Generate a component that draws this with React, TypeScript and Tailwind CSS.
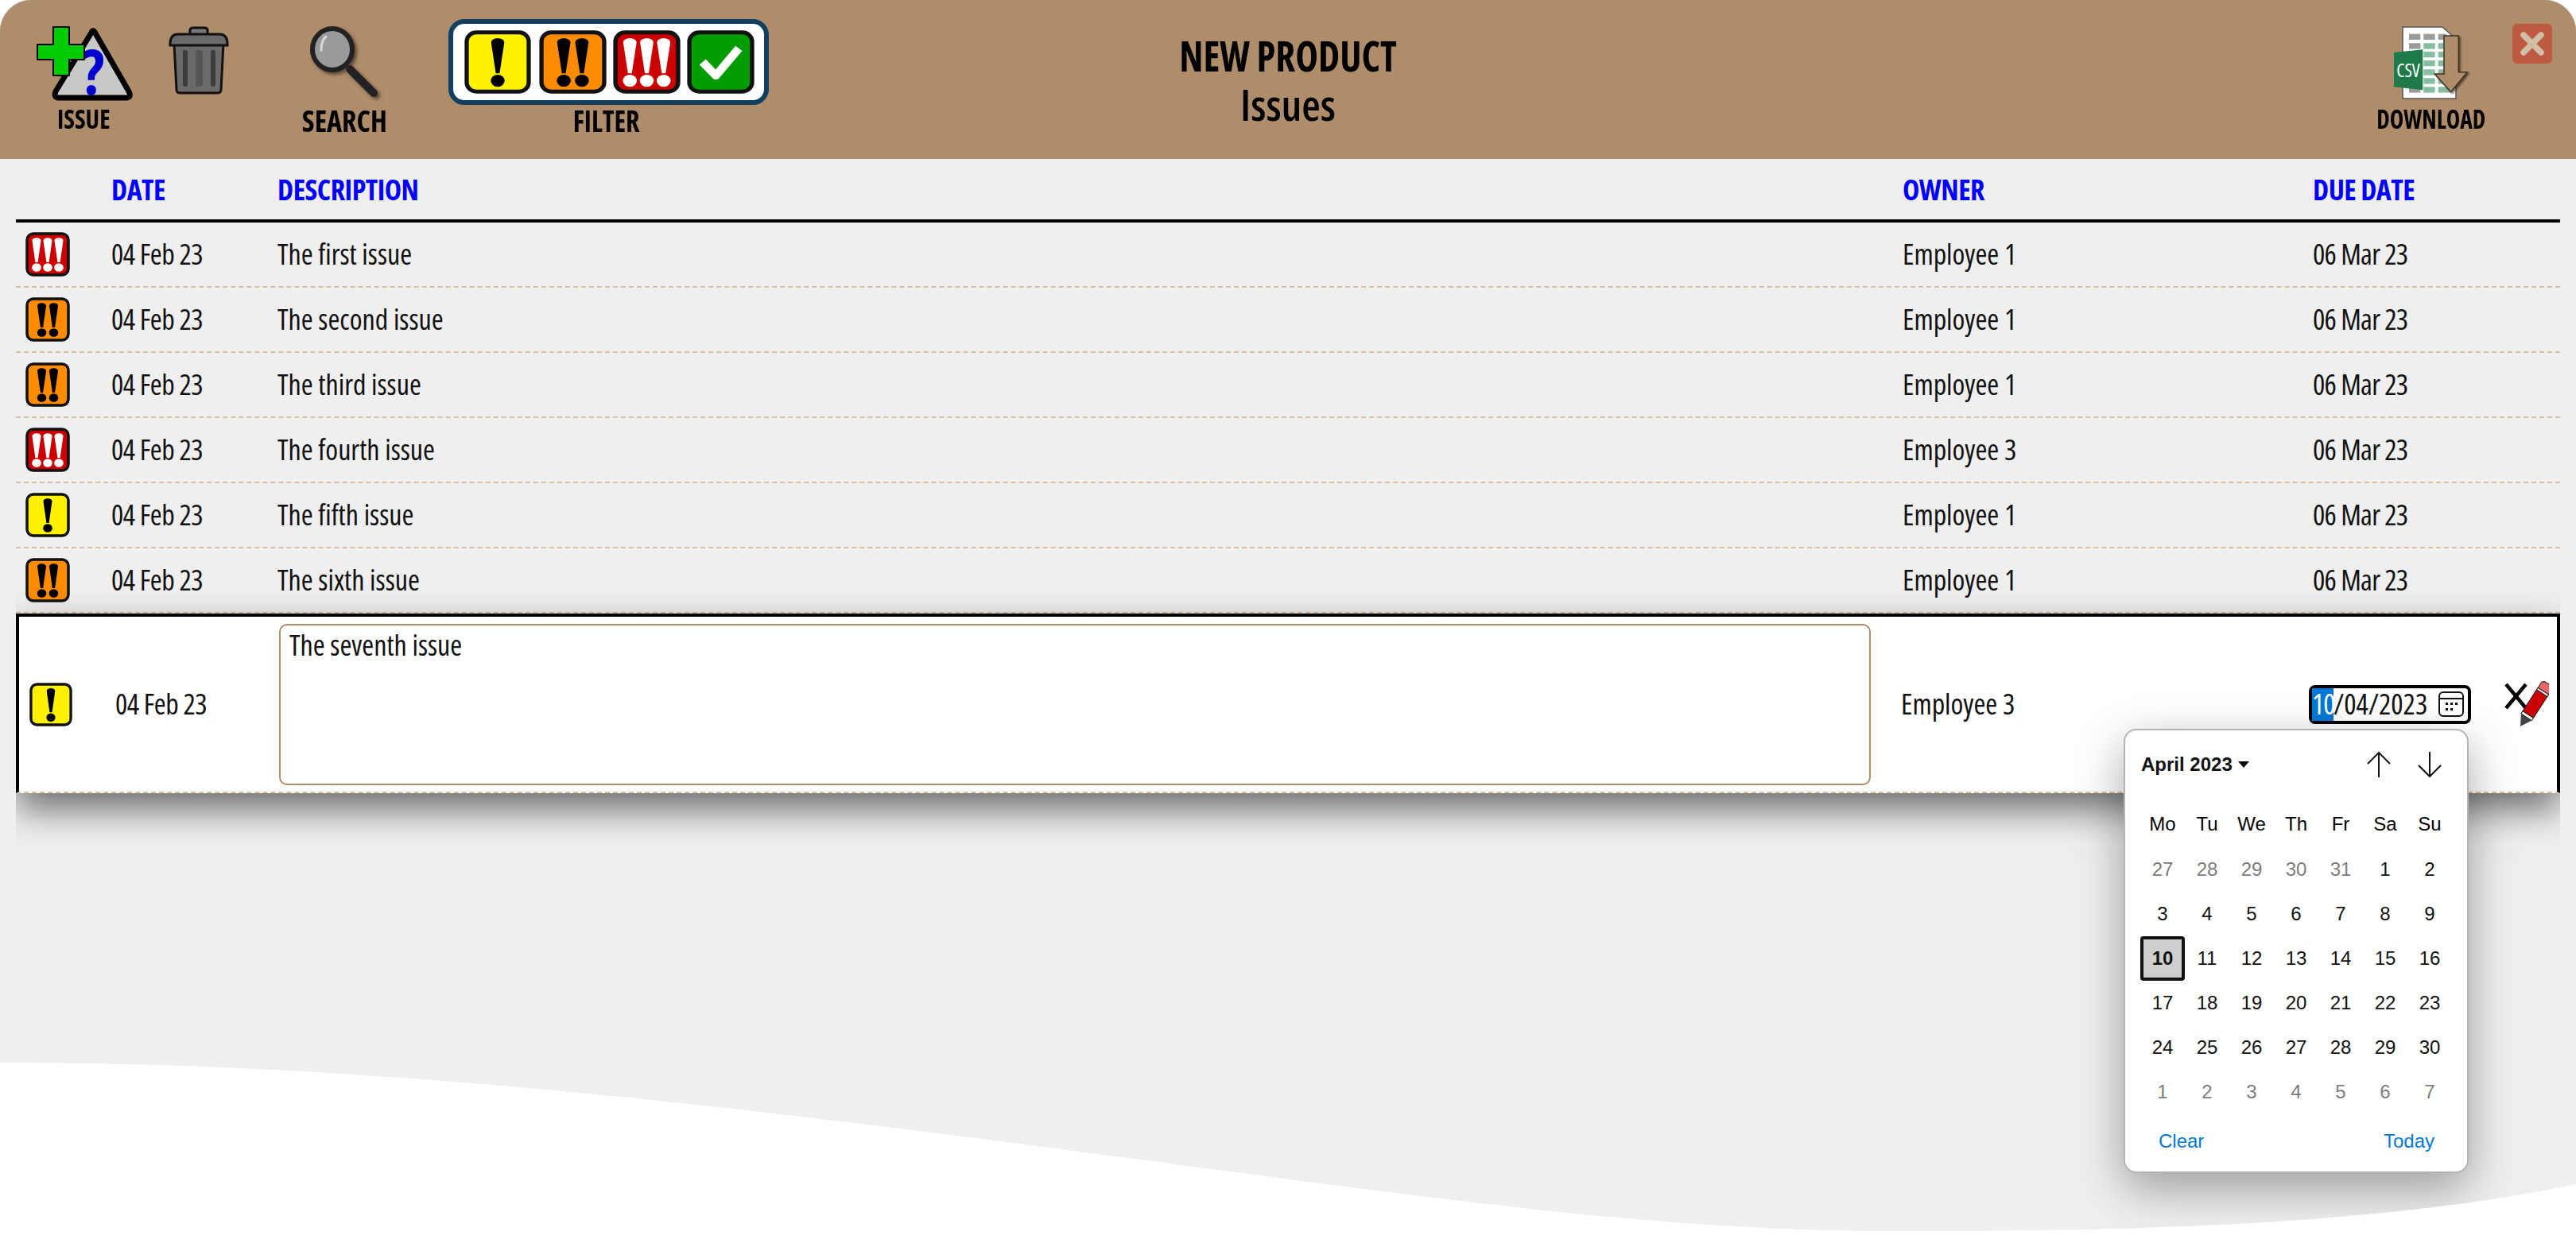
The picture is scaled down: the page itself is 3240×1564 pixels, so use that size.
type Level = 1 | 2 | 3;

const LEVEL_FILL: Record<Level, string> = { 1: '#fff200', 2: '#ff8c00', 3: '#cc0000' };

const MARKS: Record<Level, number[]> = { 1: [28], 2: [20.5, 35.5], 3: [14, 28, 42] };

const ISSUES: { level: Level; text: string; owner: string }[] = [
  { level: 3, text: 'The first issue', owner: 'Employee 1' },
  { level: 2, text: 'The second issue', owner: 'Employee 1' },
  { level: 2, text: 'The third issue', owner: 'Employee 1' },
  { level: 3, text: 'The fourth issue', owner: 'Employee 3' },
  { level: 1, text: 'The fifth issue', owner: 'Employee 1' },
  { level: 2, text: 'The sixth issue', owner: 'Employee 1' },
];

const WEEKDAYS = ['Mo', 'Tu', 'We', 'Th', 'Fr', 'Sa', 'Su'];

const DAYS: { day: number; muted?: boolean }[] = [
  ...[27, 28, 29, 30, 31].map((day) => ({ day, muted: true })),
  ...Array.from({ length: 30 }, (_, i) => ({ day: i + 1 })),
  ...[1, 2, 3, 4, 5, 6, 7].map((day) => ({ day, muted: true })),
];

function AlertIcon({ level, className }: { level: Level; className: string }) {
  const ink = level === 3 ? '#ffffff' : '#000000';
  return (
    <svg viewBox="0 0 56 56" preserveAspectRatio="none" className={className}>
      <rect x="2" y="2" width="52" height="52" rx="8" fill={LEVEL_FILL[level]} stroke="#111" strokeWidth="3.5" />
      {MARKS[level].map((x) => (
        <g key={x} fill={ink}>
          <path d={`M${x - 5.5} 11 C${x - 5.5} 6 ${x + 5.5} 6 ${x + 5.5} 11 L${x + 1.6} 38 L${x - 1.6} 38 Z`} />
          <ellipse cx={x} cy="44.5" rx="5.8" ry="5.3" />
        </g>
      ))}
    </svg>
  );
}

function CheckIcon({ className }: { className: string }) {
  return (
    <svg viewBox="0 0 56 56" preserveAspectRatio="none" className={className}>
      <rect x="2" y="2" width="52" height="52" rx="8" fill="#009c00" stroke="#111" strokeWidth="3.5" />
      <path d="M13 28 L24 40 L43 16" fill="none" stroke="#fff" strokeWidth="7" strokeLinejoin="round" />
    </svg>
  );
}

function IssueIcon() {
  return (
    <svg viewBox="0 0 121 94" className="h-[94px] w-[121px]">
      <path d="M69 8 Q71 3 74 9 L116 82 Q120 90 112 90 L28 90 Q21 90 24 82 Z" fill="#c8c8c8" stroke="#000" strokeWidth="7" strokeLinejoin="round" />
      <text x="71" y="86" fontSize="78" fontWeight="700" fill="#0000cc" textAnchor="middle">
        ?
      </text>
      <path d="M21 1 H41 V23 H60 V42 H41 V62 H21 V42 H1 V23 H21 Z" fill="#00cc00" stroke="#000" strokeWidth="2" strokeLinejoin="round" />
    </svg>
  );
}

function TrashIcon() {
  return (
    <svg viewBox="0 0 76 86" className="h-[86px] w-[76px]">
      <path d="M27 10 V5 Q27 2 31 2 H45 Q49 2 49 5 V10" fill="#777" stroke="#111" strokeWidth="3" />
      <path d="M7 22 L10 80 Q10 84 15 84 H61 Q66 84 66 80 L69 22 Z" fill="#6a6a6a" stroke="#111" strokeWidth="3" />
      <path d="M2 22 Q2 10 12 10 H64 Q74 10 74 22 V24 H2 Z" fill="#6a6a6a" stroke="#111" strokeWidth="3" />
      <rect x="18" y="30" width="6" height="46" rx="3" fill="#3c3c3c" />
      <rect x="34" y="30" width="9" height="46" rx="4" fill="#555" />
      <rect x="53" y="30" width="6" height="46" rx="3" fill="#3c3c3c" />
    </svg>
  );
}

function SearchIcon() {
  return (
    <svg viewBox="0 0 88 87" className="h-[87px] w-[88px] overflow-visible drop-shadow-[3px_3px_2px_rgba(0,0,0,0.5)]">
      <path d="M50 54 L80 84" stroke="#222" strokeWidth="10" strokeLinecap="round" />
      <ellipse cx="28" cy="29" rx="25" ry="26" fill="#9a9a9a" stroke="#222" strokeWidth="6" />
      <path d="M14 30 Q14 18 20 13" fill="none" stroke="#d8d8d8" strokeWidth="3" strokeLinecap="round" />
    </svg>
  );
}

function DownloadIcon() {
  const greenRows = [21.3, 32, 43, 54.3, 65.3, 76.3];
  return (
    <svg viewBox="0 0 93 91" className="h-[91px] w-[93px] overflow-visible">
      <path d="M11 1 H61 L78 16 V91 H11 Z" fill="#fff" stroke="#555" strokeWidth="1.5" />
      <rect x="19" y="9.7" width="14.3" height="7.3" fill="#9b9b9b" />
      <rect x="37.3" y="9.7" width="14.3" height="7.3" fill="#9b9b9b" />
      <rect x="55.7" y="9.7" width="10" height="7.3" fill="#9b9b9b" />
      <rect x="19" y="21.3" width="14.3" height="7.3" fill="#9b9b9b" />
      <rect x="19" y="76.3" width="14.3" height="7.3" fill="#9b9b9b" />
      {greenRows.map((y) => (
        <g key={y} fill="#85bd9f">
          <rect x="37.3" y={y} width="14.3" height="7.3" />
          <rect x="55.7" y={y} width="16" height="7.3" />
        </g>
      ))}
      <path d="M0 33 L36.3 29.3 V80.3 L0 76.3 Z" fill="#1f7a4a" />
      <text x="18" y="64" fontSize="23" fontWeight="400" fill="#fff" textAnchor="middle">
        CSV
      </text>
      <path d="M63 12 H81.3 V57.7 H92.3 L71.7 82.7 L51.3 60 H63 Z" fill="#b08d6a" stroke="#3b3025" strokeWidth="1.5" className="drop-shadow-[2px_2px_1px_rgba(0,0,0,0.5)]" />
    </svg>
  );
}

function CloseButton() {
  return (
    <div className="ml-[56px] mt-[-3px] flex h-[50px] w-[50px] items-center justify-center rounded-[6px] bg-[#bd5a42]">
      <svg viewBox="0 0 30 30" className="h-[30px] w-[30px]">
        <path d="M4 4 L26 26 M26 4 L4 26" stroke="#d2bfa8" strokeWidth="7.5" strokeLinecap="round" />
      </svg>
    </div>
  );
}

function CancelSaveIcon() {
  return (
    <svg viewBox="0 0 56 58" className="h-[58px] w-[56px]">
      <path d="M2 4 L27 34 M27 4 L2 34" stroke="#000" strokeWidth="4.5" />
      <g transform="translate(20 57) rotate(33)">
        <path d="M0 0 L-8 -14 H8 Z" fill="#444" />
        <rect x="-8" y="-18" width="16" height="4" fill="#fff" stroke="#222" strokeWidth="1" />
        <rect x="-8" y="-50" width="16" height="32" fill="#cc0000" stroke="#222" strokeWidth="1" />
        <rect x="-8" y="-53" width="16" height="3" fill="#fff" stroke="#222" strokeWidth="1" />
        <path d="M-8 -53 V-59 Q-8 -64 -3 -64 H3 Q8 -64 8 -59 V-53 Z" fill="#ee6666" stroke="#222" strokeWidth="1" />
      </g>
    </svg>
  );
}

function CalendarGlyph() {
  return (
    <svg viewBox="0 0 32 32" className="h-[32px] w-[32px]">
      <rect x="1" y="1" width="30" height="30" rx="5" fill="none" stroke="#111" strokeWidth="2" />
      <path d="M1 9 H31" stroke="#111" strokeWidth="2" />
      <g fill="#111">
        <rect x="9" y="14" width="3" height="3" />
        <rect x="15" y="14" width="3" height="3" />
        <rect x="21" y="14" width="3" height="3" />
        <rect x="9" y="21" width="3" height="3" />
        <rect x="15" y="21" width="3" height="3" />
      </g>
    </svg>
  );
}

function DatePopup() {
  return (
    <div className="absolute left-[2671px] top-[917px] z-10 h-[559px] w-[434px] rounded-[16px] border-2 border-[#b4b4b4] bg-white font-['Liberation_Sans',Arial,sans-serif] text-[24px] font-normal text-[#111] shadow-[0_20px_60px_rgba(0,0,0,0.35)] font-stretch-normal">
      <div className="mt-[11px] flex h-[64px] items-center pl-[20px] pr-[31px]">
        <span className="font-bold">April 2023</span>
        <svg viewBox="0 0 14 8" className="ml-[7px] h-[8px] w-[14px]">
          <path d="M0 0 H14 L7 8 Z" fill="#000" />
        </svg>
        <svg viewBox="0 0 32 34" fill="none" stroke="#111" strokeWidth="2" className="ml-auto h-[34px] w-[32px]">
          <path d="M16 33 V2 M2 16 L16 2 L30 16" />
        </svg>
        <svg viewBox="0 0 32 34" fill="none" stroke="#111" strokeWidth="2" className="ml-[32px] h-[34px] w-[32px]">
          <path d="M16 1 V32 M2 18 L16 32 L30 18" />
        </svg>
      </div>
      <div className="ml-[19px] mt-[16px] grid w-[392px] grid-cols-7">
        {WEEKDAYS.map((d) => (
          <div key={d} className="flex h-[56px] items-center justify-center pb-[3px] text-black">
            {d}
          </div>
        ))}
        {DAYS.map(({ day, muted }, i) => (
          <div
            key={i}
            className={
              day === 10 && !muted
                ? 'flex h-[56px] items-center justify-center rounded-[4px] border-4 border-[#111] bg-[#cecece] font-bold'
                : muted
                  ? 'flex h-[56px] items-center justify-center text-[#7d7d7d]'
                  : 'flex h-[56px] items-center justify-center'
            }
          >
            {day}
          </div>
        ))}
      </div>
      <div className="mt-[14px] flex h-[40px] items-center justify-between pl-[42px] pr-[41px] text-[#0078d7]">
        <span>Clear</span>
        <span>Today</span>
      </div>
    </div>
  );
}

function EditRow() {
  return (
    <div className="relative grid h-[226px] grid-cols-[121px_206px_2040px_513px_246px_1fr] items-center border-x-4 border-t-4 border-b-2 border-x-black border-t-black border-b-[#dcbf9f] bg-white shadow-[0_20px_44px_rgba(0,0,0,0.55)] [border-bottom-style:dashed]">
      <div className="pl-[13px]">
        <AlertIcon level={1} className="block h-[55px] w-[54px]" />
      </div>
      <div className="tracking-[-0.5px]">04 Feb 23</div>
      <textarea
        defaultValue="The seventh issue"
        className="h-[203px] w-[2002px] resize-none rounded-[10px] border-2 border-[#b08d6a] bg-white px-[11px] py-[1px] leading-[48px] outline-none"
      />
      <div>Employee 3</div>
      <div className="flex h-[49px] w-[204px] items-center rounded-[8px] border-4 border-black bg-white">
        <span className="flex h-[41px] w-[27px] items-center bg-[#0078d7] tracking-[-1px] text-white">10</span>
        <span>/04/2023</span>
        <span className="ml-auto mr-[5px] flex">
          <CalendarGlyph />
        </span>
      </div>
      <CancelSaveIcon />
    </div>
  );
}

export default function App() {
  return (
    <div className="relative h-[1564px] w-[3240px] overflow-hidden bg-white font-['Open_Sans',sans-serif] text-[36px] text-[#111] font-stretch-condensed">
      <div className="h-full overflow-hidden rounded-t-[40px] bg-[#efefef] shadow-[0_0_1px_#000]">
        <header className="flex h-[200px] items-start bg-[#b08d6a] pt-[33px] font-bold text-black">
          <div className="flex w-[1320px] shrink-0 items-start pl-[46px]">
            <div className="flex w-[121px] flex-col items-center">
              <IssueIcon />
              <span className="mt-[4px] mr-[2px] scale-x-[0.92] text-[34px] leading-[36px]">ISSUE</span>
            </div>
            <div className="ml-[45px]">
              <TrashIcon />
            </div>
            <div className="ml-[102px] flex w-[88px] flex-col items-center">
              <SearchIcon />
              <span className="mt-[13px] mr-[2px] scale-x-95 text-[38px] leading-[36px]">SEARCH</span>
            </div>
            <div className="ml-[86px] mt-[-9px] flex flex-col items-center">
              <div className="flex h-[108px] w-[403px] items-center rounded-[20px] border-[6px] border-[#123f60] bg-white pl-[14px]">
                <AlertIcon level={1} className="h-[80px] w-[84px]" />
                <AlertIcon level={2} className="ml-[10px] h-[80px] w-[85px]" />
                <AlertIcon level={3} className="ml-[8px] h-[80px] w-[85px]" />
                <CheckIcon className="ml-[8px] h-[80px] w-[85px]" />
              </div>
              <span className="mt-[1px] mr-[6px] scale-x-90 text-[38px] leading-[36px]">FILTER</span>
            </div>
          </div>
          <div className="mt-[5px] w-[600px] shrink-0 text-center text-[54px] leading-[62px]">
            <div className="scale-x-90">NEW PRODUCT</div>
            <div className="font-semibold">Issues</div>
          </div>
          <div className="flex flex-1 items-start justify-end pr-[30px]">
            <div className="flex w-[93px] flex-col items-center">
              <DownloadIcon />
              <span className="mt-[7px] scale-x-[0.87] text-[34px] leading-[36px]">DOWNLOAD</span>
            </div>
            <CloseButton />
          </div>
        </header>

        <main className="mx-[20px] h-[1200px] overflow-hidden">
          <div className="grid h-[80px] grid-cols-[120px_209px_2044px_516px_1fr] items-center border-b-4 border-black pt-[2px] font-bold tracking-[-0.5px] text-[#0000ff]">
            <div />
            <div>DATE</div>
            <div>DESCRIPTION</div>
            <div>OWNER</div>
            <div>DUE DATE</div>
          </div>
          {ISSUES.map((issue) => (
            <div
              key={issue.text}
              className="grid h-[82px] grid-cols-[120px_209px_2044px_516px_1fr] items-center border-b-2 border-dashed border-[#dcbf9f]"
            >
              <div className="pl-[12px]">
                <AlertIcon level={issue.level} className="block h-[56px] w-[56px]" />
              </div>
              <div className="tracking-[-0.5px]">04 Feb 23</div>
              <div>{issue.text}</div>
              <div>{issue.owner}</div>
              <div className="tracking-[-0.7px]">06 Mar 23</div>
            </div>
          ))}
          <EditRow />
        </main>
      </div>

      <DatePopup />

      <svg viewBox="0 0 3240 1564" className="absolute inset-0 z-20 h-[1564px] w-[3240px]">
        <path
          d="M0 1337 C400 1337 800 1375 1343 1447 S2100 1549 2400 1549 C2700 1549 3000 1540 3240 1490 V1564 H0 Z"
          fill="#fff"
        />
      </svg>
    </div>
  );
}
